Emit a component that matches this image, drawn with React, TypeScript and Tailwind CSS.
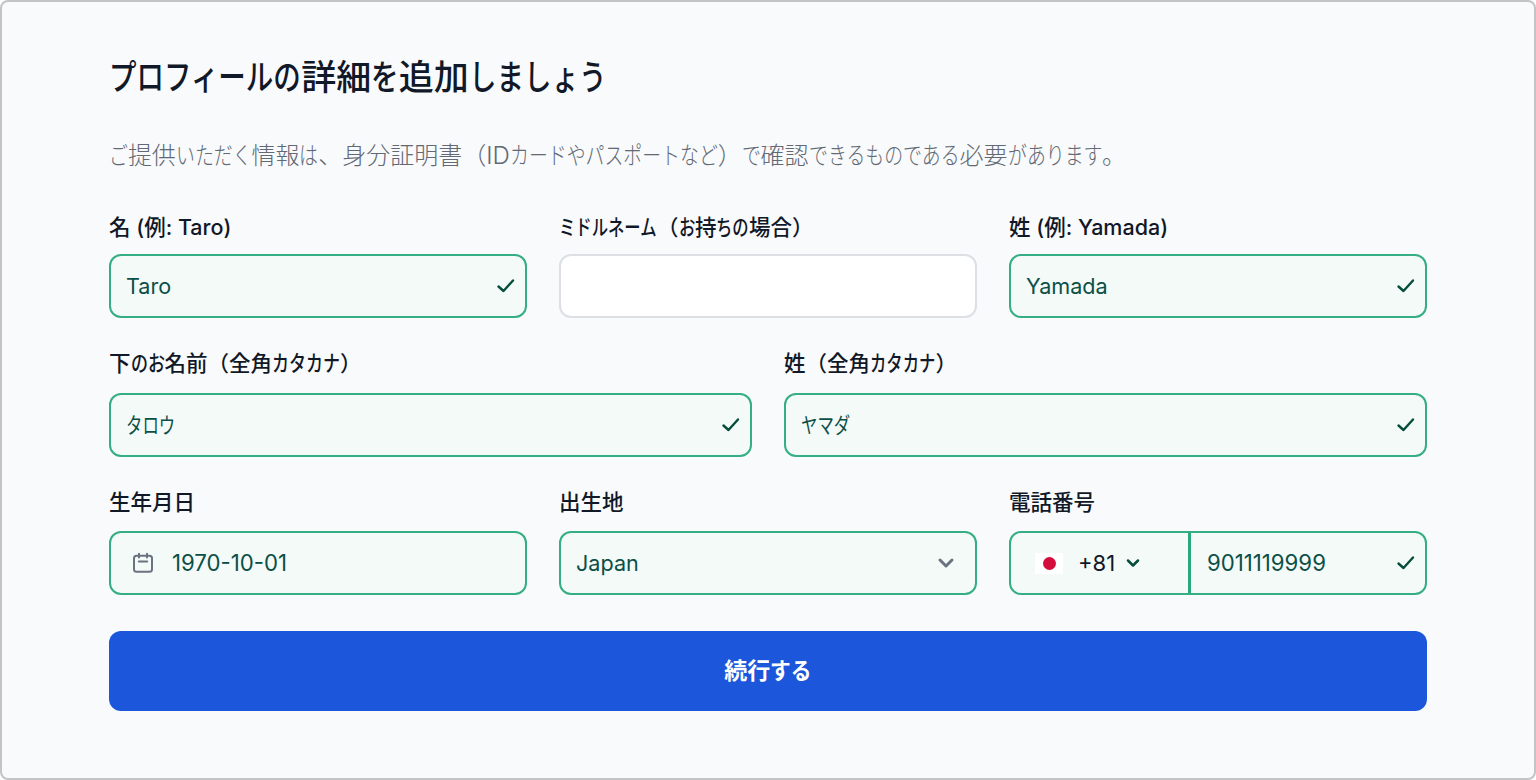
import React from 'react';
import { ChevronDown } from 'lucide-react';

const fontStack = "font-['Inter','Noto_Sans_CJK_JP',sans-serif]";

// the reference's Japanese face has narrow kana and full-width kanji, so kana runs get squeezed
const Jp = ({ text, k = 0.76 }: { text: string; k?: number }) => (
    <>
        {text.split(/([\u3040-\u30ff]+)/).map((part, i) =>
            i % 2 === 1 ? (
                <span
                    key={i}
                    className="inline-block whitespace-nowrap origin-left"
                    style={{ width: `${part.length * k}em`, transform: `scaleX(${k})` }}
                >
                    {part}
                </span>
            ) : (
                part
            )
        )}
    </>
);

const CheckIcon = () => (
    <svg className="w-[20px] h-[20px] shrink-0 text-[#064e3b]" viewBox="0 0 20 20" fill="none" stroke="currentColor" strokeWidth="2.4" strokeLinecap="round" strokeLinejoin="round">
        <path d="M2.5 10.5l5 4.5L17 4.5" />
    </svg>
);

const CalendarIcon = () => (
    <svg className="w-[22px] h-[22px] shrink-0 text-[#6b7280]" viewBox="0 0 22 22" fill="none" stroke="currentColor" strokeWidth="2" strokeLinecap="round" strokeLinejoin="round">
        <rect x="2" y="3.8" width="18" height="16" rx="2.5" />
        <path d="M7 1.8v3.6M15 1.8v3.6M6.8 9.6h8.4" />
    </svg>
);

const Label = ({ text, k, className = 'mb-[13px]' }: { text: string; k?: number; className?: string }) => (
    <label className={`block h-[28px] text-[21.5px] leading-[28px] font-medium text-[#111827] ${className}`}>
        <Jp text={text} k={k} />
    </label>
);

const boxClass = 'h-[64px] rounded-xl border-2 border-[#34ae82] bg-[#f3faf7] flex items-center';
const valueClass = 'text-[21.6px] text-[#0b4f47]';
const digitsClass = 'text-[22.2px] text-[#0b4f47]';

const Field = ({ label, value, k, labelClass }: { label: string; value: string; k?: number; labelClass?: string }) => (
    <div>
        <Label text={label} k={k} className={labelClass} />
        <div className={`${boxClass} pl-[15px] pr-[9px] justify-between`}>
            <span className={valueClass}>
                <Jp text={value} />
            </span>
            <CheckIcon />
        </div>
    </div>
);

export default function App() {
    return (
        <div className={`${fontStack} w-[1536px] h-[780px] bg-[#f9fafb] border-2 border-[#c2c4c6] rounded-lg pl-[107px] pr-[107px] pt-[51px]`}>
            <h1 className="text-[35px] leading-[48px] font-medium text-[#111827]">
                <Jp text="プロフィールの詳細を追加しましょう" k={0.785} />
            </h1>
            <p className="mt-[41px] text-2xl leading-[28px] font-light text-[#626975]">
                <Jp text="ご提供いただく情報は、身分証明書（IDカードやパスポートなど）で確認できるものである必要があります。" k={0.787} />
            </p>

            <div className="mt-[43px] grid grid-cols-3 gap-x-[32px]">
                <Field label="名 (例: Taro)" value="Taro" />
                <div>
                    <Label text="ミドルネーム（お持ちの場合）" />
                    <div className="h-[64px] rounded-xl border-2 border-[#dcdfe3] bg-white" />
                </div>
                <Field label="姓 (例: Yamada)" value="Yamada" />
            </div>

            <div className="mt-[31px] grid grid-cols-2 gap-x-[32px]">
                <Field label="下のお名前（全角カタカナ）" value="タロウ" k={0.79} labelClass="mb-[16px]" />
                <Field label="姓（全角カタカナ）" value="ヤマダ" labelClass="mb-[16px]" />
            </div>

            <div className="mt-[31px] grid grid-cols-3 gap-x-[32px]">
                <div>
                    <Label text="生年月日" className="mb-[15px]" />
                    <div className={`${boxClass} pl-[21px] gap-[18px]`}>
                        <CalendarIcon />
                        <span className={digitsClass}>1970-10-01</span>
                    </div>
                </div>
                <div>
                    <Label text="出生地" className="mb-[15px]" />
                    <div className={`${boxClass} pl-[15px] pr-[17px] justify-between`}>
                        <span className={valueClass}>Japan</span>
                        <ChevronDown className="w-[24px] h-[24px] text-[#6b7280]" strokeWidth={3} />
                    </div>
                </div>
                <div>
                    <Label text="電話番号" className="mb-[15px]" />
                    <div className={boxClass}>
                        <div className="w-[180px] h-full shrink-0 flex items-center pl-[24px] border-r-[3px] border-[#2aa87c]">
                            <span className="w-[28px] h-[21px] bg-white flex items-center justify-center">
                                <span className="w-[13px] h-[13px] rounded-full bg-[#d30d3c]" />
                            </span>
                            <span className="ml-[15px] text-[22px] text-[#111827]">+81</span>
                            <ChevronDown className="ml-[8px] w-[20px] h-[20px] text-[#064e3b]" strokeWidth={3} />
                        </div>
                        <div className="flex-1 flex items-center justify-between pl-[16px] pr-[9px]">
                            <span className={digitsClass}>9011119999</span>
                            <CheckIcon />
                        </div>
                    </div>
                </div>
            </div>

            <button className="mt-[36px] w-full h-[80px] rounded-xl bg-[#1c56db] text-[23px] font-semibold text-white flex items-center justify-center">
                <Jp text="続行する" k={0.9} />
            </button>
        </div>
    );
}
